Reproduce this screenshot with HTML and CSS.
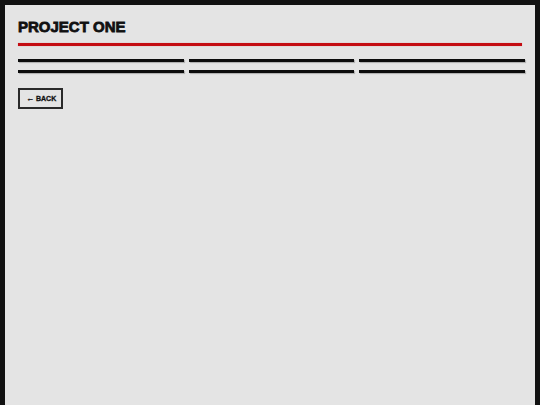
FILE: index.html
```html
<!DOCTYPE html>
<html lang="en">
  <head>
    <meta charset="UTF-8" />
    <title>Project One</title>
    <link rel="stylesheet" href="styles.css">
  </head>
  <body>
    <div class="panel">
      <h1 class="title">PROJECT ONE</h1>
      <div class="rule"></div>

      <div class="meta">
        <div class="meta-col"><span></span><span></span></div>
        <div class="meta-col"><span></span><span></span></div>
        <div class="meta-col"><span></span><span></span></div>
      </div>

      <button class="back" type="button"><span class="arrow">&larr;</span> BACK</button>
    </div>
  </body>
</html>
```

FILE: styles.css
```css
html,
body {
  height: 100%;
}
body {
  margin: 0;
  background: #111;
  font-family: "Liberation Sans", Arial, sans-serif;
  overflow: hidden;
}
.panel {
  margin: 5px 5px 0 5px;
  height: calc(100% - 5px);
  background: #e4e4e4;
  padding: 13px 13px 0 13px;
  box-sizing: border-box;
}
.title {
  margin: 0;
  font-size: 15px;
  line-height: 17px;
  font-weight: 900;
  color: #111;
  -webkit-text-stroke: 0.8px #111;
}
.rule {
  margin-top: 8px;
  height: 3px;
  background: #c40c12;
  box-shadow: 0 0 1px rgba(200, 20, 20, 0.5);
}
.meta {
  display: grid;
  grid-template-columns: 1fr 1fr 1fr;
  column-gap: 5px;
  margin-top: 13px;
  margin-right: -3px;
}
.meta-col {
  display: flex;
  flex-direction: column;
  gap: 8px;
}
.meta-col span {
  display: block;
  height: 3px;
  background: #0c0c0c;
  box-shadow: 1px 1px 1px rgba(0, 0, 0, 0.25);
}
.back {
  display: flex;
  align-items: center;
  gap: 2px;
  margin-top: 15px;
  width: 45px;
  height: 21px;
  padding: 0 0 0 6px;
  border: 2px solid #2a2a2a;
  background: transparent;
  font-family: "Liberation Sans", Arial, sans-serif;
  font-size: 7px;
  font-weight: 700;
  color: #111;
  -webkit-text-stroke: 0.3px #111;
  white-space: nowrap;
  cursor: pointer;
}
.back .arrow {
  font-size: 8px;
  font-weight: 400;
}
```
